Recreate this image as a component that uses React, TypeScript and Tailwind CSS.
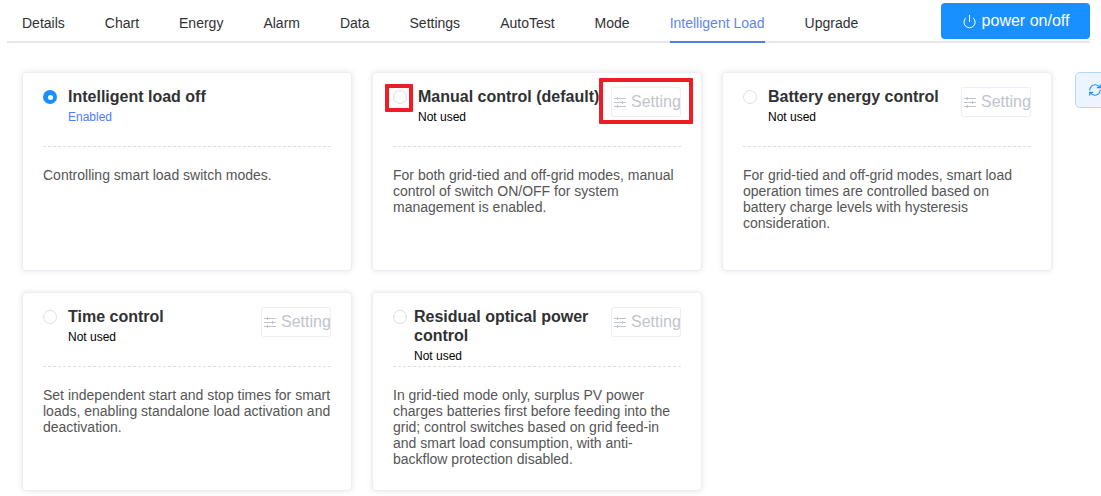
import React from 'react';
import { Power, RefreshCw } from 'lucide-react';

const tabs = ['Details', 'Chart', 'Energy', 'Alarm', 'Data', 'Settings', 'AutoTest', 'Mode', 'Intelligent Load', 'Upgrade'];

const SliderIcon = () => (
  <svg width="12" height="12" viewBox="0 0 12 12" fill="none" stroke="currentColor" strokeWidth="1" className="shrink-0">
    <path d="M0 2.5h12M0 6.5h12M0 10.5h12" />
    <path d="M3.5 1v3M8.5 5v3M3.5 9v3" />
  </svg>
);

interface ModeCardProps {
  title: string;
  status: string;
  text: string;
  active?: boolean;
  setting?: boolean;
  titleGap?: string;
  marked?: boolean;
}

const ModeCard: React.FC<ModeCardProps> = ({ title, status, text, active, setting = true, titleGap = 'ml-[11px]', marked }) => (
  <div className="relative h-[199px] rounded-[4px] border border-[#ebeef5] bg-white px-[20px] pt-[14px] shadow-[0_0_6px_rgba(0,0,0,0.1)]">
    <div className="flex h-[60px] items-start border-b border-dashed border-[#dcdfe6]">
      <div className={active
        ? 'mt-[3px] flex h-[14px] w-[14px] shrink-0 items-center justify-center rounded-full bg-[#1890ff]'
        : 'mt-[3px] h-[14px] w-[14px] shrink-0 rounded-full border border-[#dcdfe6] bg-white'}>
        {active && <div className="h-[5px] w-[5px] rounded-full bg-white" />}
      </div>
      <div className={`${titleGap} min-w-0 flex-1`}>
        <div className="text-[16px] font-bold leading-[19px] text-[#303133]">{title}</div>
        <div className={active ? 'mt-[4px] text-[12px] leading-[14px] text-[#4d7cfe]' : 'mt-[4px] text-[12px] leading-[14px] text-black'}>{status}</div>
      </div>
      {setting && (
        <div className="ml-[10px] flex h-[30px] w-[70px] shrink-0 items-center overflow-hidden rounded-[3px] border border-[#ebeef5] bg-white pl-[2px] text-[16px] text-[#c0c4cc]">
          <SliderIcon />
          <span className="ml-[5px]">Setting</span>
        </div>
      )}
    </div>
    <p className="mt-[20px] text-[14px] leading-[16px] text-[#555555]">{text}</p>
    {marked && (
      <>
        <div className="absolute left-[12px] top-[11px] h-[28px] w-[28px] rounded-[1px] border-[4px] border-[#ee1c25]" />
        <div className="absolute left-[226px] top-[5px] h-[46px] w-[94px] rounded-[1px] border-[4px] border-[#ee1c25]" />
      </>
    )}
  </div>
);

export default function App() {
  return (
    <div className="h-[496px] w-[1101px] overflow-hidden bg-white font-['Liberation_Sans',Arial,sans-serif]">
      <div className="ml-[7px] flex h-[43px] w-[1083px] items-start border-b-2 border-[#e4e7ed]">
        <div className="flex h-[43px] flex-1 gap-[40px] pl-[15px]">
          {tabs.map((tab) => (
            <div
              key={tab}
              className={tab === 'Intelligent Load'
                ? 'h-[43px] border-b-2 border-[#4a7fe8] pt-[15px] text-[14px] leading-[16px] text-[#5f86ee]'
                : 'h-[43px] pt-[15px] text-[14px] leading-[16px] text-[#303133]'}
            >
              {tab}
            </div>
          ))}
        </div>
        <div className="mt-[3px] flex h-[36px] w-[149px] items-center justify-center gap-[5px] rounded-[4px] bg-[#1890ff] text-[16px] text-white">
          <Power size={15} strokeWidth={1.6} />
          <span>power on/off</span>
        </div>
      </div>
      <div className="flex items-start">
        <div className="ml-[22px] mt-[29px] grid grid-cols-[330px_330px_330px] gap-x-[20px] gap-y-[21px]">
          <ModeCard title="Intelligent load off" status="Enabled" active setting={false} text="Controlling smart load switch modes." />
          <ModeCard title="Manual control (default)" status="Not used" marked text="For both grid-tied and off-grid modes, manual control of switch ON/OFF for system management is enabled." />
          <ModeCard title="Battery energy control" status="Not used" text="For grid-tied and off-grid modes, smart load operation times are controlled based on battery charge levels with hysteresis consideration." />
          <ModeCard title="Time control" status="Not used" text="Set independent start and stop times for smart loads, enabling standalone load activation and deactivation." />
          <ModeCard title="Residual optical power control" status="Not used" titleGap="ml-[7px]" text="In grid-tied mode only, surplus PV power charges batteries first before feeding into the grid; control switches based on grid feed-in and smart load consumption, with anti-backflow protection disabled." />
        </div>
        <div className="ml-[23px] mt-[29px] flex h-[36px] w-[40px] shrink-0 items-center justify-center rounded-[5px] border border-[#b3d8ff] bg-[#ecf5ff] text-[#1890ff]">
          <RefreshCw size={14} />
        </div>
      </div>
    </div>
  );
}
